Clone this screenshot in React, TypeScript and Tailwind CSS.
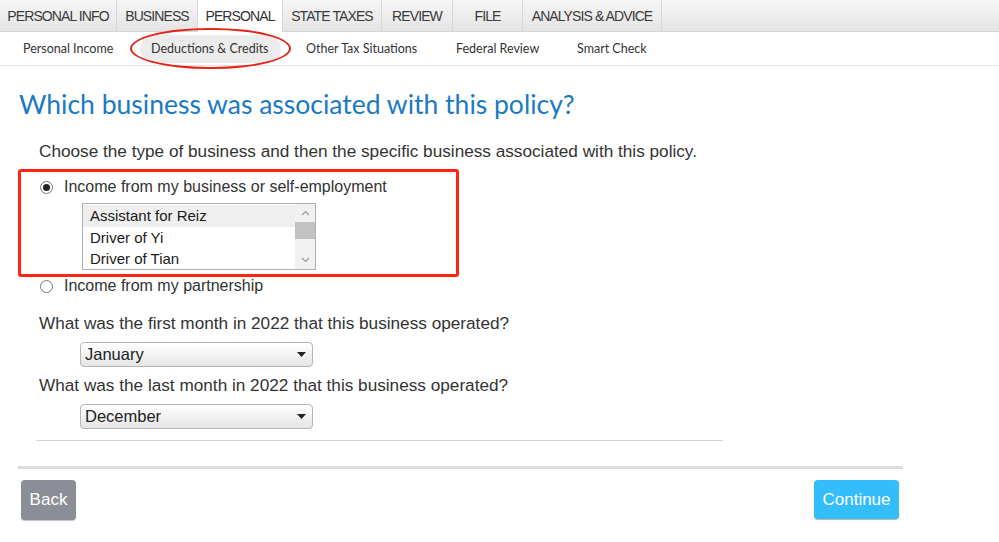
import React from 'react';

const TABS = [
  { label: 'PERSONAL INFO', w: 117 },
  { label: 'BUSINESS', w: 81 },
  { label: 'PERSONAL', w: 85, active: true },
  { label: 'STATE TAXES', w: 99 },
  { label: 'REVIEW', w: 71 },
  { label: 'FILE', w: 70 },
  { label: 'ANALYSIS & ADVICE', w: 139 },
];

const SUBTABS = [
  { label: 'Personal Income', w: 128 },
  { label: 'Deductions & Credits', w: 155, active: true },
  { label: 'Other Tax Situations', w: 150 },
  { label: 'Federal Review', w: 121 },
  { label: 'Smart Check', w: 120 },
];

const BUSINESSES = ['Assistant for Reiz', 'Driver of Yi', 'Driver of Tian'];

const Radio: React.FC<{ checked?: boolean }> = ({ checked }) => (
  <span className="flex h-[13px] w-[13px] items-center justify-center rounded-full border border-[#777] bg-white">
    {checked && <span className="h-[7px] w-[7px] rounded-full bg-[#222]" />}
  </span>
);

const Select: React.FC<{ value: string }> = ({ value }) => (
  <div className="ml-[41px] flex h-[25px] w-[233px] items-center justify-between rounded-[4px] border border-[#b5b5b5] bg-gradient-to-b from-white to-[#e6e6e6] pl-[4px] pr-[6px] text-[16.5px] text-[#222]">
    <span>{value}</span>
    <svg width="9" height="5" viewBox="0 0 9 5">
      <path d="M0 0h9L4.5 5z" fill="#222" />
    </svg>
  </div>
);

export default function App() {
  return (
    <div className="h-[542px] w-[999px] overflow-hidden bg-white font-['Liberation_Sans',Arial,sans-serif] text-[#333]">
      {/* top tabs */}
      <div className="flex h-[32px] bg-gradient-to-b from-[#f6f6f6] to-[#e4e4e4] shadow-[inset_0_-1px_0_#d6d6d6]">
        {TABS.map((t) => (
          <div
            key={t.label}
            style={{ width: t.w }}
            className={`flex items-center justify-center border-r border-[#d6d6d6] text-[14px] tracking-[-0.9px] ${
              t.active ? 'bg-white text-[#333]' : 'text-[#3a3a3a]'
            }`}
          >
            {t.label}
          </div>
        ))}
      </div>

      {/* sub tabs */}
      <div className="flex h-[34px] items-center border-b border-[#e2e2e2] pl-[23px] pt-[1px] font-['Lato',sans-serif] text-[12.5px] text-[#333]">
        {SUBTABS.map((s) => (
          <div key={s.label} style={{ width: s.w }} className="shrink-0">
            <span className="relative inline-block">
              {s.active && (
                <>
                  <span className="absolute -left-[11px] -right-[12px] -top-[5px] -bottom-[5px] rounded-full bg-[#ececec]" />
                  <span className="absolute -left-[21px] -right-[22px] -top-[12px] -bottom-[11px] rounded-[50%] border-[2.5px] border-[#e8231a]" />
                </>
              )}
              <span className="relative">{s.label}</span>
            </span>
          </div>
        ))}
      </div>

      <div className="pl-[19px]">
        <h1 className="mt-[22px] font-['Lato',sans-serif] text-[26.5px] leading-[32px] text-[#1a7ac4]">
          Which business was associated with this policy?
        </h1>

        <p className="ml-[20px] mt-[21px] text-[17.2px] leading-[20px]">
          Choose the type of business and then the specific business associated with this policy.
        </p>

        <div className="-ml-[1px] mt-[8px] h-[108px] w-[441px] rounded-[3px] border-[3px] border-[#ff2414] pl-[19px] pt-[5px]">
          <div className="flex items-center gap-[11px] text-[16px] leading-[20px]">
            <Radio checked />
            <span>Income from my business or self-employment</span>
          </div>
          <div className="ml-[42px] mt-[6px] flex h-[67px] w-[234px] border border-[#b0b0b0] text-[15px] text-[#1a1a1a]">
            <div className="flex-1 pt-[1px]">
              {BUSINESSES.map((b, i) => (
                <div
                  key={b}
                  className={`h-[21.5px] pl-[7px] leading-[21px] ${i === 0 ? 'bg-[#efefef]' : ''}`}
                >
                  {b}
                </div>
              ))}
            </div>
            <div className="flex w-[20px] flex-col items-center bg-[#f1f1f1]">
              <svg className="mt-[6px]" width="9" height="6" viewBox="0 0 9 6">
                <path d="M1 5l3.5-3.5L8 5" fill="none" stroke="#9a9a9a" strokeWidth="1.2" />
              </svg>
              <div className="mt-[6px] h-[17px] w-[20px] bg-[#c2c2c2]" />
              <svg className="mt-auto mb-[6px]" width="9" height="6" viewBox="0 0 9 6">
                <path d="M1 1l3.5 3.5L8 1" fill="none" stroke="#9a9a9a" strokeWidth="1.2" />
              </svg>
            </div>
          </div>
        </div>

        <div className="ml-[21px] mt-[-1px] flex items-center gap-[11px] text-[16px] leading-[20px]">
          <Radio />
          <span>Income from my partnership</span>
        </div>

        <p className="ml-[20px] mt-[17px] text-[17.2px] leading-[20px]">
          What was the first month in 2022 that this business operated?
        </p>
        <div className="ml-[20px] mt-[9px]">
          <Select value="January" />
        </div>
        <p className="ml-[20px] mt-[8px] text-[17.2px] leading-[20px]">
          What was the last month in 2022 that this business operated?
        </p>
        <div className="ml-[20px] mt-[9px]">
          <Select value="December" />
        </div>

        <div className="ml-[17px] mt-[11px] h-[1px] w-[687px] bg-[#d4d4d4]" />

        <div className="-ml-[1px] mt-[25px] h-[3px] w-[885px] bg-[#dedede]" />

        <div className="mt-[11px] flex w-[880px] items-start justify-between pl-[2px]">
          <button className="h-[40px] w-[55px] rounded-[4px] bg-[#8b8e96] text-[17px] text-white shadow-[0_1px_1px_rgba(0,0,0,0.25)]">
            Back
          </button>
          <button className="h-[39px] w-[85px] rounded-[4px] bg-[#33bdfb] text-[17px] text-white shadow-[0_1px_1px_rgba(0,0,0,0.3)]">
            Continue
          </button>
        </div>
      </div>
    </div>
  );
}
